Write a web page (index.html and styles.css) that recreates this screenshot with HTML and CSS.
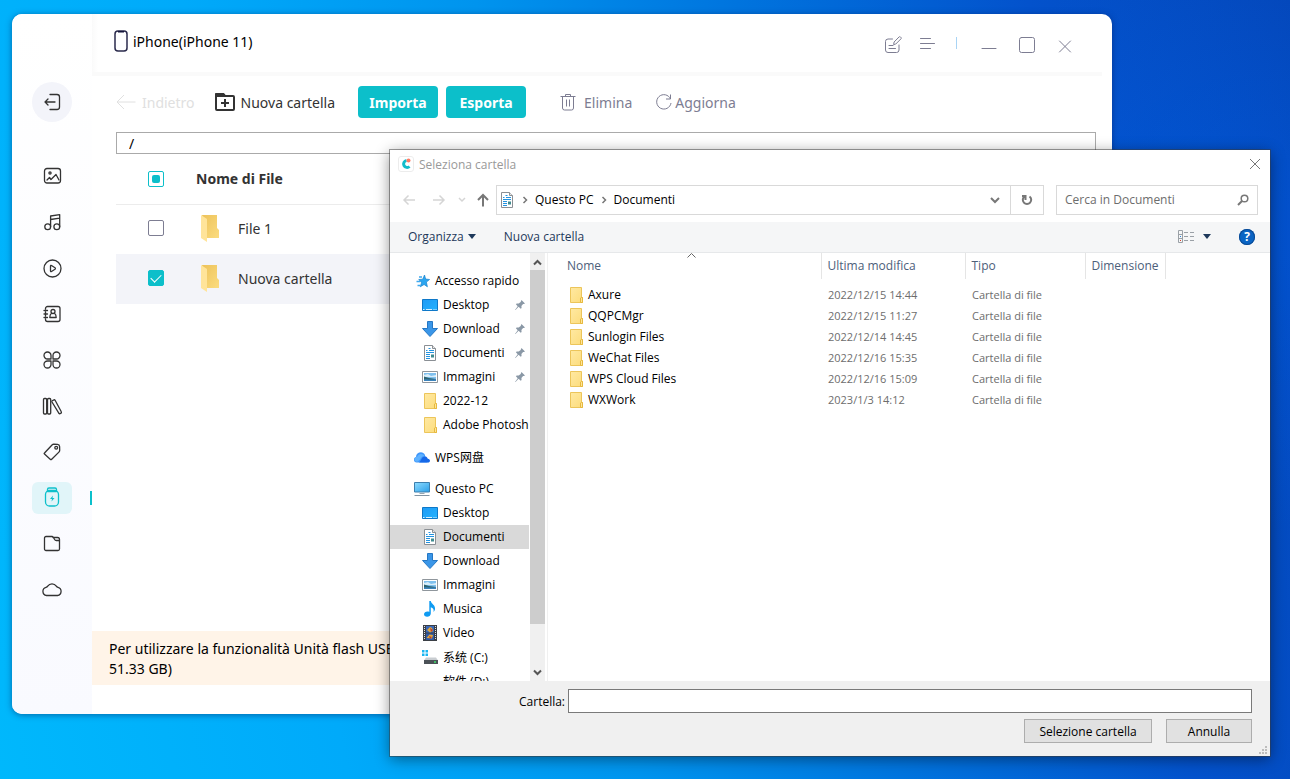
FILE: index.html
```html
<!DOCTYPE html>
<html lang="it">
<head>
  <meta charset="UTF-8" />
  <meta name="viewport" content="width=device-width, initial-scale=1" />
  <title>iPhone(iPhone 11)</title>
  <link rel="stylesheet" href="styles.css">
</head>
<body>

<!-- Shared icons -->
<svg class="sprite" aria-hidden="true">
  <defs>
    <linearGradient id="gFolder" x1="0" y1="0" x2="1" y2="1">
      <stop offset="0" stop-color="#ffe9a2"/><stop offset="1" stop-color="#fcdc7c"/>
    </linearGradient>
    <linearGradient id="gBack" x1="0" y1="0" x2="1" y2="1">
      <stop offset="0" stop-color="#edc25a"/><stop offset="1" stop-color="#fbdc7f"/>
    </linearGradient>
    <linearGradient id="gBlue" x1="0" y1="0" x2="1" y2="1">
      <stop offset="0" stop-color="#1f9bf5"/><stop offset="1" stop-color="#22b2ff"/>
    </linearGradient>
    <linearGradient id="gPc" x1="0" y1="0" x2="1" y2="1">
      <stop offset="0" stop-color="#8fdcff"/><stop offset="1" stop-color="#2b9fe8"/>
    </linearGradient>
  </defs>
  <symbol id="i-folder" viewBox="0 0 16 16">
    <path d="M2.5.5h11v10h1v5h-12z" fill="url(#gFolder)" stroke="#ecc55a"/>
    <path d="M12.5 15.5v-4.500l1-.5h1v5z" fill="#ffe59a" stroke="#e6b93f"/>
  </symbol>
  <symbol id="i-bigfolder" viewBox="0 0 18 28">
    <path d="M1 1h15v13l2 2v8H6z" fill="url(#gBack)"/>
    <path d="M0 1l6 4v23l-6-4z" fill="#ffe49a"/>
  </symbol>
  <symbol id="i-desktop" viewBox="0 0 16 16">
    <path d="M.5 2.500h15v11H.5z" fill="url(#gBlue)" stroke="#0e78c8"/>
    <path d="M1 12.500h1.500M4 12.500h6M11.500 12.500h1M13.500 12.500h1" stroke="#d8f0ff"/>
  </symbol>
  <symbol id="i-download" viewBox="0 0 16 16">
    <path d="M5.500.5h5v7h5L8 15.500.5 7.500h5z" fill="#3a96e8" stroke="#2577c4"/>
  </symbol>
  <symbol id="i-doc" viewBox="0 0 16 16">
    <path d="M2.500.5h8l3 3v12h-11z" fill="#fff" stroke="#8a8f94"/>
    <path d="M10.500.5v3h3" fill="#e8e8e8" stroke="#8a8f94"/>
    <path d="M4 5.500h1.500M6.500 3.500h2M7 5.500h5M4 7.500h8M4 9.500h4M4 11.500h4M4 13.500h4" stroke="#2393e0"/>
    <path d="M9 9.500h3v3H9z" fill="#3f8b8f"/>
  </symbol>
  <symbol id="i-image" viewBox="0 0 16 16">
    <path d="M.5 2.500h15v11H.5z" fill="#fff" stroke="#8f969c"/>
    <path d="M2 4h12v8H2z" fill="#7fc0ee"/>
    <path d="M2 6l4-1 3 2 5-1v2H2z" fill="#d9eefa"/>
    <path d="M2 7.500l5 1.500 7 1v2H2z" fill="#2d6471"/>
    <path d="M2 10.500c3-1 6 1 12-.5v2H2z" fill="#3c83bb"/>
  </symbol>
  <symbol id="i-star" viewBox="0 0 16 16">
    <path d="M10.500 2l1.100 4 4 .5-3.200 2.600 1 4.700-3.300-2.300-3.800 2.300 1.300-4.400L4.700 6.500l4-.3z" fill="#2aa5f0" stroke="#1982cd" stroke-width=".7"/>
    <path d="M5 4h3M2.500 8.500h4M3.500 12.500h3" stroke="#3fa9ee" stroke-width="1.300"/>
  </symbol>
  <symbol id="i-wps" viewBox="0 0 16 16">
    <path d="M2.500 13.500A2.800 2.800 0 0 1 2 8a4.800 4.800 0 0 1 8.500-3l3 8.500z" fill="#3f97fb"/>
    <path d="M5 13.500c2-1 2.500-6.500 6-6 2.200.2 2.500 1.500 2.800 2.300 3 .2 2.800 3.700 0 3.700z" fill="#1668e8"/>
    <path d="M1 12c2 2 4.500-.5 6-3 1-1.800 2.500-2 3.500-1.600C9.500 4 4 4.500 3.500 7.500 1 7.500-.5 10 1 12z" fill="#5fb2ff"/>
  </symbol>
  <symbol id="i-pc" viewBox="0 0 16 16">
    <path d="M.5 1.500h15v9.500H.5z" fill="url(#gPc)" stroke="#3c7fae"/>
    <path d="M5.500 12.500h5" stroke="#9aa7b1"/>
    <path d="M.5 14.500h15" stroke="#8294a3"/>
  </symbol>
  <symbol id="i-note" viewBox="0 0 16 16">
    <path d="M7.300 0h1.500c.3 3 5 4 4.200 8.500-.3 1.300-1 2-1.600 2.300.8-2.300-.2-4-2.600-4.600v6.300c0 2-1.800 3.300-3.700 3.300S2 14.500 2 13.200s1.600-2.600 3.500-2.600c.7 0 1.300.1 1.800.4z" fill="#0f9bf2"/>
  </symbol>
  <symbol id="i-film" viewBox="0 0 16 16">
    <path d="M1 0h14v16H1z" fill="#3b3f46"/>
    <path d="M4 1h8v6.500H4z" fill="#3a68b8"/><path d="M4 8.500h8V15H4z" fill="#2f5aa8"/>
    <path d="M5 5l3-3 2 1 1 3-3 1.500zM4.500 13l3-3.500L11 10l-1 3.500z" fill="#e0a83c"/>
    <path d="M8 3l3 2-2 2zM7 11l3 1-2 2z" fill="#b93f30"/>
    <path d="M2.500 1v14M13.500 1v14" stroke="#dfe3e8" stroke-dasharray="1 1"/>
  </symbol>
  <symbol id="i-drive" viewBox="0 0 16 16">
    <path d="M4 8.500h10l2 3H2z" fill="#c9cdd1"/>
    <path d="M2 11h14v4H2z" fill="#4b5157"/>
    <path d="M12 13h2" stroke="#3ee06a" stroke-width="1.500"/>
    <path d="M0 1h2.500v2.500H0zM3.500 1H6v2.500H3.500zM0 4.500h2.500V7H0zM3.500 4.500H6V7H3.500z" fill="#19b5f1"/>
  </symbol>
  <symbol id="i-pin" viewBox="0 0 12 12">
    <path d="M7.500 1L11 4.500l-1.100.6-.8-.2-1.700 2 .2 2-.9.900-2.100-2.100L1.500 11l-.5-.1L3.700 7.200 1.900 5.300l.8-.9 2 .2 2-1.700L7 2z" fill="#8a98a6"/>
  </symbol>
</svg>

<main class="desktop">

  <!-- Phone manager window -->
  <section class="app">
    <nav class="sidebar">
      <button class="side-back" aria-label="Esci">
        <svg width="20" height="20" viewBox="0 0 20 20"><path d="M8 2.500h7a2.500 2.500 0 0 1 2.500 2.500v10a2.500 2.500 0 0 1-2.500 2.500H8M13 10H3M6 7l-3 3 3 3"/></svg>
      </button>
      <a href="#" class="side-item" aria-label="Foto">
        <svg width="20" height="20" viewBox="0 0 20 20"><rect x="2.500" y="2.500" width="16" height="14.500" rx="2.500"/><circle cx="8" cy="7" r="1.100"/><path d="M5 14l2.500-2.500 1.500 2 5-5 3 5.500"/></svg>
      </a>
      <a href="#" class="side-item" aria-label="Musica">
        <svg width="20" height="20" viewBox="0 0 20 20"><circle cx="5.700" cy="14.800" r="2.900"/><circle cx="14.800" cy="14.800" r="2.900"/><path d="M8.600 14.800V4l9.100-1.300v12M8.600 7.500l9.100-1.300"/></svg>
      </a>
      <a href="#" class="side-item" aria-label="Video">
        <svg width="20" height="20" viewBox="0 0 20 20"><circle cx="10.500" cy="10.500" r="8.500"/><path d="M8.500 8v5c0 .6.500.8 1 .5l3.500-2.300c.5-.4.500-1 0-1.400L9.500 7.500c-.5-.3-1-.1-1 .5z"/></svg>
      </a>
      <a href="#" class="side-item" aria-label="Contatti">
        <svg width="20" height="20" viewBox="0 0 20 20"><path d="M3.500 5V4.500a2 2 0 0 1 2-2H16a2 2 0 0 1 2 2v11a2 2 0 0 1-2 2H5.500a2 2 0 0 1-2-2V15M3.500 8v4M2 6.500h3.500M2 10h3.500M2 13.500h3.500"/><circle cx="11" cy="7.500" r="2"/><path d="M9.500 9.200c-1.200.8-1.700 2-1.700 4.300h6.400c0-2.300-.5-3.500-1.700-4.300"/></svg>
      </a>
      <a href="#" class="side-item" aria-label="App">
        <svg width="20" height="20" viewBox="0 0 20 20"><path d="M9 9H5.500A3.500 3.500 0 1 1 9 5.500zM11 9h3.500A3.500 3.500 0 1 0 11 5.500zM9 11H5.500A3.500 3.500 0 1 0 9 14.500zM11 11h3.500a3.500 3.500 0 1 1-3.500 3.500z"/></svg>
      </a>
      <a href="#" class="side-item" aria-label="Libri">
        <svg width="20" height="20" viewBox="0 0 20 20"><rect x="1.500" y="2.500" width="3.200" height="15.500" rx="1"/><rect x="5.500" y="2.500" width="3.200" height="15.500" rx="1"/><path d="M10.300 4.800l1.600-.9c.5-.3.900-.1 1.200.4l6.200 11.500c.3.500.1 1-.4 1.300l-.9.500c-.5.300-1 .1-1.200-.4L10 6c-.2-.5-.1-.9.300-1.200z"/></svg>
      </a>
      <a href="#" class="side-item" aria-label="Etichette">
        <svg width="20" height="20" viewBox="0 0 20 20"><path d="M2.500 11L10 3c.6-.6 1-.8 1.800-.8l3.700.2c1.300.1 2 .8 2.100 2.100l.1 3.700c0 .8-.3 1.400-.8 1.900l-7.200 7.200c-.5.500-1 .5-1.500 0l-5.700-5.200c-.5-.4-.4-.7 0-1.100z"/><circle cx="14.200" cy="5.800" r="1.400"/></svg>
      </a>
      <a href="#" class="side-item active" aria-label="Unità flash">
        <svg width="20" height="20" viewBox="0 0 20 20"><rect x="3.500" y="2.500" width="13" height="15.500" rx="4"/><path d="M5.500 3V1.500A1.500 1.500 0 0 1 7 0h6a1.500 1.500 0 0 1 1.500 1.500V3M5.500 3.500h9"/><path class="fill" d="M11 7.500L8 11h2l-.5 2.500 3-3.500h-2z"/></svg>
      </a>
      <a href="#" class="side-item" aria-label="File">
        <svg width="20" height="20" viewBox="0 0 20 20"><path d="M4 2.500h6c.8 0 1 .4 1.400 1l1.200 2c.4.700.8 1 1.600 1h2.300c.7 0 1 .4 1 1V15a1.500 1.500 0 0 1-1.500 1.500H4A1.500 1.500 0 0 1 2.500 15V4A1.500 1.500 0 0 1 4 2.500zM11 3.500h4.500a2 2 0 0 1 2 2v2"/></svg>
      </a>
      <a href="#" class="side-item" aria-label="Cloud">
        <svg width="22" height="20" viewBox="0 0 22 20"><path d="M5.500 15.500a4.200 4.200 0 0 1-.5-8.200c.8-.2 1.200-.4 1.700-1.200a5.200 5.200 0 0 1 8.600 0c.5.800.9 1 1.700 1.200a4.200 4.200 0 0 1-.5 8.200z"/></svg>
      </a>
    </nav>

    <div class="content">
      <header class="app-header">
        <svg width="14" height="22" viewBox="0 0 14 22"><rect x="1" y="1" width="12" height="20" rx="3" fill="#fff" stroke="#2a2a4c" stroke-width="1.500"/><path d="M4 1h6v1.500H4z" fill="#15153a"/></svg>
        <h1>iPhone(iPhone 11)</h1>
        <div class="tools">
          <button aria-label="Feedback"><svg width="20" height="20" viewBox="0 0 20 20"><path d="M9.500 4H5a2.500 2.500 0 0 0-2.500 2.500v8.500A2.500 2.500 0 0 0 5 17.500h8.500a2.500 2.500 0 0 0 2.500-2.500v-5M6 10.500h4M6 13.500h6.500M10.700 9.200l.4-2.200 4.900-5c.5-.5 1-.5 1.500 0l.4.400c.5.500.5 1 0 1.500l-4.900 4.900z"/></svg></button>
          <button aria-label="Menu"><svg width="20" height="20" viewBox="0 0 20 20"><path d="M2.500 3.500h10M2.500 8.500h14M2.500 13.500h10"/></svg></button>
        </div>
        <div class="win-buttons">
          <button aria-label="Riduci"><svg width="20" height="20" viewBox="0 0 20 20"><path d="M3 13.500h14"/></svg></button>
          <button aria-label="Ingrandisci"><svg width="20" height="20" viewBox="0 0 20 20"><rect x="2.500" y="2.500" width="15" height="15" rx="2"/></svg></button>
          <button aria-label="Chiudi"><svg width="20" height="20" viewBox="0 0 20 20"><path d="M4.500 6l11 11M15.500 6l-11 11"/></svg></button>
        </div>
      </header>

      <div class="toolbar">
        <button class="tool back" disabled><svg width="20" height="18" viewBox="0 0 20 18"><path d="M19.500 9H1M8 2L1 9l7 7"/></svg>Indietro</button>
        <button class="tool new"><svg width="20" height="18" viewBox="0 0 20 18"><path d="M1 2.500V16a1 1 0 0 0 1 1h16a1 1 0 0 0 1-1V4a1 1 0 0 0-1-1h-8L8.500 1H2a1 1 0 0 0-1 1.500zM10 6v8M6 10h8"/><path d="M1 1h7l2 2H1z"/></svg>Nuova cartella</button>
        <button class="btn">Importa</button>
        <button class="btn">Esporta</button>
        <button class="tool delete"><svg width="16" height="18" viewBox="0 0 16 18"><path d="M.5 3.500h15M5.500 3V1.500h5V3M2.500 4v11a2 2 0 0 0 2 2h7a2 2 0 0 0 2-2V4M6.500 6.500v7M9.500 6.500v7"/></svg>Elimina</button>
        <button class="tool refresh"><svg width="16" height="18" viewBox="0 0 16 18"><path d="M14.500 6A7.200 7.200 0 1 0 15 10M14.500 1.500V6H10"/></svg>Aggiorna</button>
      </div>

      <div class="files">
        <input type="text" class="path" value="/" aria-label="Percorso">
        <table>
          <thead>
            <tr>
              <th class="col-check"><input type="checkbox" class="check partial" aria-label="Seleziona tutto"></th>
              <th>Nome di File</th>
            </tr>
          </thead>
          <tbody>
            <tr>
              <td class="col-check"><input type="checkbox" class="check" id="file1"></td>
              <td><label class="file-name" for="file1"><svg width="18" height="28"><use href="#i-bigfolder"/></svg>File 1</label></td>
            </tr>
            <tr class="selected">
              <td class="col-check"><input type="checkbox" class="check" id="file2" checked></td>
              <td><label class="file-name" for="file2"><svg width="18" height="28"><use href="#i-bigfolder"/></svg>Nuova cartella</label></td>
            </tr>
          </tbody>
        </table>
      </div>

      <p class="notice">Per utilizzare la funzionalità Unità flash USB<br>51.33 GB)</p>
    </div>
  </section>

  <!-- Folder picker -->
  <section class="dialog">
    <header class="title">
      <svg width="16" height="16" viewBox="0 0 16 16"><rect x=".5" y=".5" width="15" height="15" rx="2.500" fill="#fff" stroke="#ececec"/><path d="M8.500 4.500a3.500 3.500 0 1 0 3 6" fill="none" stroke="#14bccb" stroke-width="3"/><circle cx="10.500" cy="4.500" r="2" fill="#ff7b66"/></svg>
      <h2>Seleziona cartella</h2>
      <button aria-label="Chiudi"><svg width="12" height="12" viewBox="0 0 12 12"><path d="M1 1l10 10M11 1L1 11" fill="none" stroke="#777"/></svg></button>
    </header>

    <div class="address-row">
      <button class="nav-btn" aria-label="Indietro" disabled><svg width="14" height="12" viewBox="0 0 14 12"><path d="M13 6H2M6.500 1.500L2 6l4.500 4.500"/></svg></button>
      <button class="nav-btn" aria-label="Avanti" disabled><svg width="14" height="12" viewBox="0 0 14 12"><path d="M1 6h11M7.500 1.500L12 6l-4.500 4.500"/></svg></button>
      <button class="nav-btn recent" aria-label="Recenti" disabled><svg width="8" height="6" viewBox="0 0 8 6"><path d="M1 1l3 3 3-3"/></svg></button>
      <button class="nav-btn up" aria-label="Su"><svg width="14" height="14" viewBox="0 0 14 14"><path d="M7 13.500V2M2 7l5-5 5 5"/></svg></button>
      <div class="address">
        <svg width="16" height="16"><use href="#i-doc"/></svg>
        <svg class="sep" width="6" height="8" viewBox="0 0 6 8"><path d="M1.500 1l3 3-3 3"/></svg>
        <a href="#">Questo PC</a>
        <svg class="sep" width="6" height="8" viewBox="0 0 6 8"><path d="M1.500 1l3 3-3 3"/></svg>
        <a href="#">Documenti</a>
        <button class="drop" aria-label="Percorsi precedenti"><svg width="10" height="8" viewBox="0 0 10 8"><path d="M1 2l4 4 4-4"/></svg></button>
        <button class="reload" aria-label="Aggiorna"><svg width="12" height="14" viewBox="0 0 12 14"><path d="M8.500 3.500a4.200 4.200 0 1 1-5 0M4.500 7V3H1"/></svg></button>
      </div>
      <div class="search">
        <input type="text" placeholder="Cerca in Documenti" aria-label="Cerca in Documenti">
        <svg width="12" height="12" viewBox="0 0 12 12"><circle cx="7.500" cy="4.500" r="3.300" fill="none" stroke="#777" stroke-width="1.500"/><path d="M5 7L1 11" stroke="#777" stroke-width="2"/></svg>
      </div>
    </div>

    <div class="commands">
      <button>Organizza <i class="caret"></i></button>
      <button>Nuova cartella</button>
      <button class="view" aria-label="Visualizza">
        <svg width="16" height="13" viewBox="0 0 16 13"><path d="M.5.5h4v12h-4zM.5 4.500h4M.5 8.500h4M6 2.500h4M12 2.500h4M6 6.500h4M12 6.500h4M6 10.500h4M12 10.500h4" fill="none" stroke="#9aa0a6"/><path d="M2 6.500h1" stroke="#2a86d8"/><path d="M2 10.500h1" stroke="#d8432a"/></svg>
        <i class="caret"></i>
      </button>
      <button class="help" aria-label="Guida">?</button>
    </div>

    <div class="browser">
      <div class="tree">
        <ul>
          <li class="root"><a href="#"><svg width="16" height="16"><use href="#i-star"/></svg>Accesso rapido</a></li>
          <li><a href="#"><svg width="16" height="16"><use href="#i-desktop"/></svg>Desktop<svg class="pin" width="12" height="12"><use href="#i-pin"/></svg></a></li>
          <li><a href="#"><svg width="16" height="16"><use href="#i-download"/></svg>Download<svg class="pin" width="12" height="12"><use href="#i-pin"/></svg></a></li>
          <li><a href="#"><svg width="16" height="16"><use href="#i-doc"/></svg>Documenti<svg class="pin" width="12" height="12"><use href="#i-pin"/></svg></a></li>
          <li><a href="#"><svg width="16" height="16"><use href="#i-image"/></svg>Immagini<svg class="pin" width="12" height="12"><use href="#i-pin"/></svg></a></li>
          <li><a href="#"><svg width="16" height="16"><use href="#i-folder"/></svg>2022-12</a></li>
          <li><a href="#"><svg width="16" height="16"><use href="#i-folder"/></svg>Adobe Photoshop</a></li>
        </ul>
        <ul>
          <li class="root"><a href="#"><svg width="16" height="16"><use href="#i-wps"/></svg>WPS网盘</a></li>
        </ul>
        <ul>
          <li class="root"><a href="#"><svg width="16" height="16"><use href="#i-pc"/></svg>Questo PC</a></li>
          <li><a href="#"><svg width="16" height="16"><use href="#i-desktop"/></svg>Desktop</a></li>
          <li class="current"><a href="#"><svg width="16" height="16"><use href="#i-doc"/></svg>Documenti</a></li>
          <li><a href="#"><svg width="16" height="16"><use href="#i-download"/></svg>Download</a></li>
          <li><a href="#"><svg width="16" height="16"><use href="#i-image"/></svg>Immagini</a></li>
          <li><a href="#"><svg width="16" height="16"><use href="#i-note"/></svg>Musica</a></li>
          <li><a href="#"><svg width="16" height="16"><use href="#i-film"/></svg>Video</a></li>
          <li><a href="#"><svg width="16" height="16"><use href="#i-drive"/></svg>系统 (C:)</a></li>
          <li><a href="#"><svg width="16" height="16" viewBox="0 0 16 16"><path d="M4 8h10l2 3H2z" fill="#c9cdd1"/><path d="M2 11h14v4H2z" fill="#4b5157"/></svg>软件 (D:)</a></li>
        </ul>
      </div>
      <div class="scrollbar">
        <svg width="9" height="7" viewBox="0 0 9 7"><path d="M1 5.500L4.500 2 8 5.500"/></svg>
        <div class="thumb"></div>
        <svg width="9" height="7" viewBox="0 0 9 7"><path d="M1 1.500L4.500 5 8 1.500"/></svg>
      </div>

      <div class="listing">
        <table>
          <thead>
            <tr>
              <th class="col-name">Nome <svg class="sort" width="9" height="5" viewBox="0 0 9 5"><path d="M.5 4.500l4-4 4 4" fill="none" stroke="#666"/></svg></th>
              <th class="col-date">Ultima modifica</th>
              <th class="col-type">Tipo</th>
              <th class="col-size">Dimensione</th>
              <th class="col-rest"></th>
            </tr>
          </thead>
          <tbody>
            <tr><td><svg width="16" height="16"><use href="#i-folder"/></svg>Axure</td><td>2022/12/15 14:44</td><td>Cartella di file</td><td></td><td></td></tr>
            <tr><td><svg width="16" height="16"><use href="#i-folder"/></svg>QQPCMgr</td><td>2022/12/15 11:27</td><td>Cartella di file</td><td></td><td></td></tr>
            <tr><td><svg width="16" height="16"><use href="#i-folder"/></svg>Sunlogin Files</td><td>2022/12/14 14:45</td><td>Cartella di file</td><td></td><td></td></tr>
            <tr><td><svg width="16" height="16"><use href="#i-folder"/></svg>WeChat Files</td><td>2022/12/16 15:35</td><td>Cartella di file</td><td></td><td></td></tr>
            <tr><td><svg width="16" height="16"><use href="#i-folder"/></svg>WPS Cloud Files</td><td>2022/12/16 15:09</td><td>Cartella di file</td><td></td><td></td></tr>
            <tr><td><svg width="16" height="16"><use href="#i-folder"/></svg>WXWork</td><td>2023/1/3 14:12</td><td>Cartella di file</td><td></td><td></td></tr>
          </tbody>
        </table>
      </div>
    </div>

    <footer>
      <div class="field">
        <label for="folder">Cartella:</label>
        <input type="text" id="folder">
      </div>
      <div class="actions">
        <button class="select">Selezione cartella</button>
        <button>Annulla</button>
      </div>
      <svg class="grip" width="8" height="8" viewBox="0 0 8 8"><path d="M6 0h2v2H6zM3 3h2v2H3zM6 3h2v2H6zM0 6h2v2H0zM3 6h2v2H3zM6 6h2v2H6z" fill="#bdbdbd"/></svg>
    </footer>
  </section>

</main>
</body>
</html>
```
FILE: styles.css
```css
* {
  box-sizing: border-box;
}

body {
  margin: 0;
  font-family: "Open Sans", "Noto Sans", "Noto Sans CJK SC", sans-serif;
  color: #000;
}

button, input {
  font: inherit;
  color: inherit;
  margin: 0;
  padding: 0;
}

button {
  background: none;
  border: none;
  cursor: pointer;
}

a {
  color: inherit;
  text-decoration: none;
}

svg {
  display: block;
  flex: none;
}

h1, h2, p, ul {
  margin: 0;
  padding: 0;
  font-weight: normal;
}

table {
  width: 100%;
  border-collapse: collapse;
  table-layout: fixed;
}

th, td {
  padding: 0;
  text-align: left;
}

.sprite {
  position: absolute;
  width: 0;
  height: 0;
}

.desktop {
  position: relative;
  height: 100vh;
  overflow: hidden;
  background:
    radial-gradient(circle at 96% 30%, rgba(0, 100, 240, 0.35), transparent 22%),
    linear-gradient(78deg, #00b8fc 0%, #00aafa 24%, #0094ee 44%, #0074de 62%, #0352cc 82%, #0446b8 100%);
}

/* ---------- phone manager ---------- */
.app {
  position: absolute;
  top: 14px;
  left: 12px;
  right: 178px;
  bottom: 65px;
  display: flex;
  overflow: hidden;
  background: #fff;
  border-radius: 10px;
  box-shadow: 0 1px 6px rgba(0, 30, 90, 0.5);
  font-family: "Noto Sans", "Open Sans", sans-serif;
  font-size: 14px;
}

.sidebar {
  width: 80px;
  padding-top: 68px;
  display: flex;
  flex-direction: column;
  align-items: center;
  gap: 14px;
  background: linear-gradient(#fff, #f9faff);
}

.sidebar svg {
  fill: none;
  stroke: #333;
  stroke-width: 1.3;
  stroke-linecap: round;
  stroke-linejoin: round;
}

.side-back {
  width: 40px;
  height: 40px;
  flex: none;
  margin-bottom: 24px;
  display: flex;
  align-items: center;
  justify-content: center;
  border-radius: 50%;
  background: #f3f4fa;
}

.side-item {
  position: relative;
  width: 40px;
  height: 32px;
  display: flex;
  align-items: center;
  justify-content: center;
  border-radius: 6px;
}

.side-item.active {
  background: #e1f5f9;
}

.side-item.active svg {
  overflow: visible;
  stroke: #0cc0cb;
}

.side-item .fill {
  fill: #0cc0cb;
  stroke: none;
}

.side-item.active::after {
  content: "";
  position: absolute;
  right: -20px;
  top: 9px;
  width: 2px;
  height: 14px;
  background: #0cc0cb;
}

.content {
  flex: 1;
  min-width: 0;
  display: flex;
  flex-direction: column;
}

.app-header {
  height: 62px;
  margin-right: 10px;
  padding: 0 27px 4px 22px;
  display: flex;
  align-items: center;
  border-bottom: 4px solid #fafafa;
  background: linear-gradient(90deg, #fafafa, #fff 6px);
}

.app-header h1 {
  flex: 1;
  margin-left: 5px;
  font-size: 14px;
}

.tools, .win-buttons {
  display: flex;
  gap: 15px;
  padding-top: 8px;
}

.win-buttons {
  gap: 18px;
  margin-left: 18px;
  padding-left: 23px;
  background: linear-gradient(#a9d4f5, #a9d4f5) 0 10px / 1px 12px no-repeat;
}

.tools svg, .win-buttons svg {
  fill: none;
  stroke: #7d7d92;
  stroke-linecap: round;
  stroke-linejoin: round;
}

.toolbar {
  display: flex;
  align-items: center;
  height: 32px;
  margin: 10px 16px 14px 24px;
}

.tool {
  display: flex;
  align-items: center;
  gap: 6px;
  color: #7d7d92;
}

.tool svg {
  fill: none;
  stroke: currentColor;
  stroke-linejoin: round;
}

.tool.back {
  color: #e0e0e0;
}

.tool.new {
  margin: 0 23px 0 20px;
  color: #333;
}

.tool.new svg {
  stroke-width: 2;
}

.tool.delete {
  gap: 8px;
  margin: 0 24px 0 26px;
}

.tool.refresh {
  gap: 3px;
}

.btn {
  width: 80px;
  height: 32px;
  margin-right: 8px;
  border-radius: 4px;
  background: #0cbfca;
  color: #fff;
  font-weight: bold;
}

.files {
  flex: 1;
  margin: 0 16px 0 24px;
}

.path {
  display: block;
  width: 100%;
  height: 22px;
  padding: 0 12px;
  border: 1px solid #aaa;
  background: #fff;
}

.files th, .files td {
  height: 50px;
  padding-bottom: 2px;
  color: #333;
}

.files th {
  padding-bottom: 0;
  font-weight: bold;
  border-bottom: 1px solid #ececec;
}

.files .col-check {
  width: 80px;
  padding-left: 32px;
}

.files .selected {
  background: #f3f4f9;
}

.file-name {
  display: flex;
  align-items: center;
  gap: 19px;
  padding-left: 5px;
}

.check {
  appearance: none;
  display: grid;
  place-items: center;
  width: 16px;
  height: 16px;
  border: 1px solid #7d7d92;
  border-radius: 2px;
  background: #fff;
}

.check.partial {
  border-color: #0cbfca;
}

.check.partial::before {
  content: "";
  width: 8px;
  height: 8px;
  border-radius: 2px;
  background: #0cbfca;
}

.check:checked {
  border-color: #0cbfca;
  background: #0cbfca;
}

.check:checked::before {
  content: "";
  width: 9px;
  height: 5px;
  margin-bottom: 3px;
  border: solid #fff;
  border-width: 0 0 1px 1px;
  transform: rotate(-45deg);
}

.notice {
  margin-bottom: 29px;
  padding: 8px 17px 6px;
  background: #fff4e8;
  line-height: 20px;
}

/* ---------- folder picker ---------- */
.dialog {
  position: absolute;
  top: 150px;
  left: 390px;
  right: 20px;
  bottom: 23px;
  display: flex;
  flex-direction: column;
  background: #fff;
  box-shadow: 0 0 0 1px rgba(60, 60, 60, 0.5), 0 3px 14px rgba(0, 0, 0, 0.45);
  font-size: 12px;
}

.title {
  height: 35px;
  padding: 0 9px 7px 8px;
  display: flex;
  align-items: center;
  gap: 5px;
}

.title h2 {
  flex: 1;
  font-size: 12px;
  color: #999;
}

.address-row {
  display: flex;
  height: 30px;
  margin: 0 12px 7px 4px;
}

.nav-btn {
  width: 30px;
  display: grid;
  place-items: center;
}

.nav-btn svg, .address .sep, .drop svg, .reload svg {
  fill: none;
  stroke: #777;
  stroke-width: 2;
}

.nav-btn:disabled svg {
  stroke: #d5d5d5;
  stroke-width: 1.5;
}

.nav-btn.recent {
  width: 16px;
}

.nav-btn.up {
  width: 26px;
}

.address {
  flex: 1;
  display: flex;
  align-items: center;
  gap: 7px;
  padding: 0 0 1px 2px;
  border: 1px solid #d9d9d9;
}

.address .sep {
  stroke-width: 1.5;
}

.drop {
  margin-left: auto;
}

.reload {
  align-self: stretch;
  width: 33px;
  margin: 0 0 -1px 3px;
  display: grid;
  place-items: center;
  border-left: 1px solid #d9d9d9;
}

.search {
  width: 202px;
  margin-left: 12px;
  padding: 0 8px 1px;
  display: flex;
  align-items: center;
  border: 1px solid #d9d9d9;
}

.search input {
  flex: 1;
  min-width: 0;
  border: none;
  outline: none;
}

.search input::placeholder {
  color: #6d6d6d;
}

.commands {
  height: 31px;
  padding: 0 15px 1px 18px;
  display: flex;
  align-items: center;
  gap: 28px;
  background: #f5f6f7;
  border-bottom: 1px solid #e6e8ea;
  color: #1e395b;
}

.commands button {
  display: flex;
  align-items: center;
  gap: 4px;
}

.caret {
  border: 4px solid transparent;
  border-top: 5px solid #1e395b;
  border-bottom: none;
}

.commands .view {
  margin-left: auto;
  gap: 9px;
}

.commands .help {
  width: 16px;
  height: 16px;
  justify-content: center;
  border-radius: 50%;
  background: #0a64c4;
  box-shadow: 0 0 0 1px #0a4a94 inset;
  color: #fff;
  font-weight: bold;
}

.browser {
  flex: 1;
  min-height: 0;
  display: flex;
}

.tree {
  width: 139px;
  padding-top: 16px;
  overflow: hidden;
}

.tree ul {
  list-style: none;
  margin-bottom: 8px;
}

.tree a {
  display: flex;
  align-items: center;
  gap: 5px;
  height: 24px;
  padding: 0 0 1px 32px;
  white-space: nowrap;
}

.tree .root a {
  padding-left: 24px;
}

.tree .current {
  background: #d9d9d9;
}

.pin {
  margin-left: auto;
  margin-right: 3px;
}

.scrollbar {
  width: 17px;
  margin-left: 1px;
  padding: 6px 2px 5px 0;
  display: flex;
  flex-direction: column;
  align-items: center;
  gap: 4px;
  background: linear-gradient(90deg, #f0f0f0 15px, #fff 15px);
}

.scrollbar svg {
  fill: none;
  stroke: #555;
  stroke-width: 2;
}

.scrollbar .thumb {
  width: 15px;
  height: 85%;
  margin-bottom: auto;
  background: #cdcdcd;
}

.listing {
  flex: 1;
  border-left: 1px solid #f0f0f0;
}

.listing th {
  height: 26px;
  padding: 0 0 1px 6px;
  border-right: 1px solid #e5e5e5;
  color: #4c607a;
  font-weight: normal;
}

.listing .col-name {
  position: relative;
  width: 273px;
  padding-left: 19px;
}

.listing .col-date {
  width: 144px;
}

.listing .col-type {
  width: 120px;
}

.listing .col-size {
  width: 80px;
}

.listing .col-rest {
  border: none;
}

.sort {
  position: absolute;
  top: 0;
  left: 139px;
}

.listing td {
  height: 21px;
  padding-left: 7px;
  font-size: 11px;
  color: #6d6d6d;
}

.listing tbody::before {
  content: "";
  display: block;
  height: 5px;
}

.listing td:first-child {
  display: flex;
  align-items: center;
  gap: 4px;
  padding-left: 20px;
  font-size: 12px;
  color: #000;
}

footer {
  position: relative;
  height: 75px;
  padding: 8px 18px 0;
  background: #f0f0f0;
}

.field {
  display: flex;
  align-items: center;
  gap: 3px;
  padding-left: 111px;
}

.field input {
  flex: 1;
  height: 24px;
  padding: 0 4px;
  border: 1px solid #7a7a7a;
  background: #fff;
}

.actions {
  display: flex;
  justify-content: flex-end;
  gap: 14px;
  margin-top: 6px;
}

.actions button {
  width: 86px;
  height: 24px;
  border: 1px solid #adadad;
  background: #e1e1e1;
}

.actions .select {
  width: 128px;
}

.grip {
  position: absolute;
  right: 3px;
  bottom: 2px;
}
```
